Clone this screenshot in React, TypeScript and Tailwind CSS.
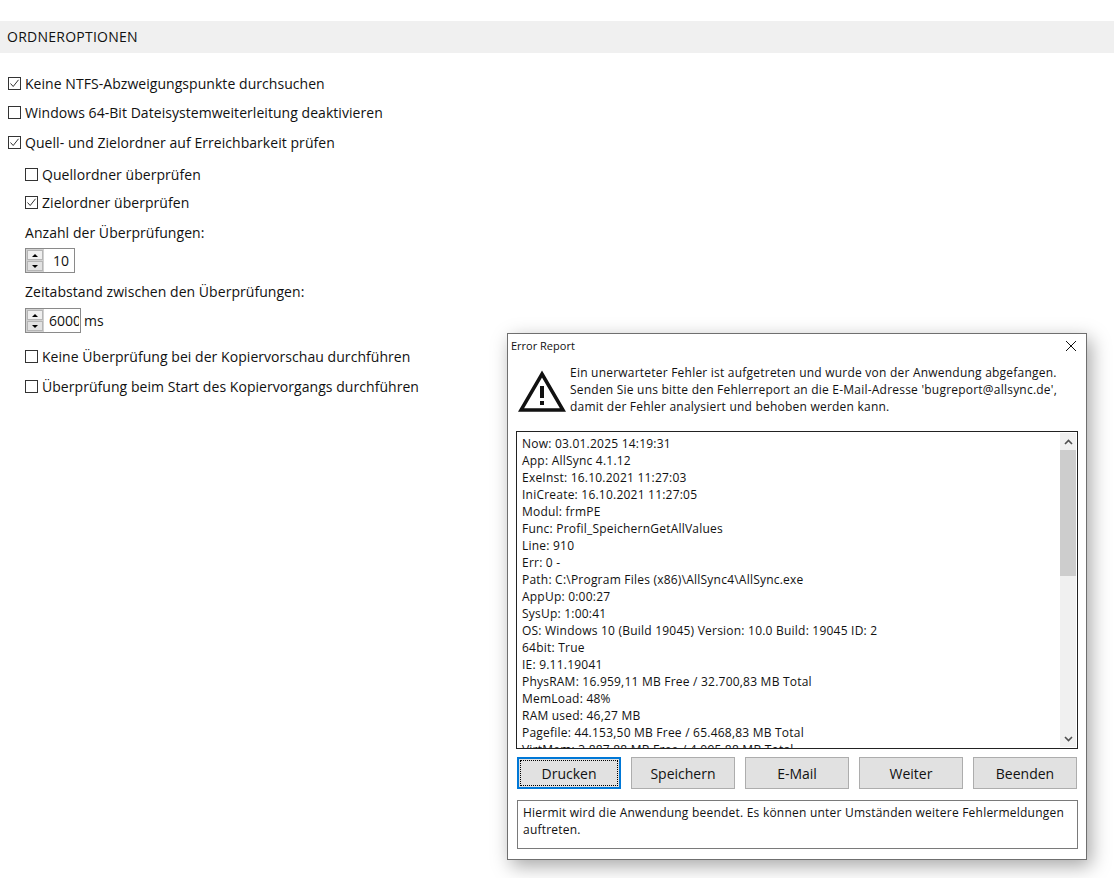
import React from 'react';

const font = { fontFamily: '"Open Sans", "Noto Sans", sans-serif' };

const reportLines = [
  'Now: 03.01.2025 14:19:31',
  'App: AllSync 4.1.12',
  'ExeInst: 16.10.2021 11:27:03',
  'IniCreate: 16.10.2021 11:27:05',
  'Modul: frmPE',
  'Func: Profil_SpeichernGetAllValues',
  'Line: 910',
  'Err: 0 -',
  'Path: C:\\Program Files (x86)\\AllSync4\\AllSync.exe',
  'AppUp: 0:00:27',
  'SysUp: 1:00:41',
  'OS: Windows 10 (Build 19045) Version: 10.0 Build: 19045 ID: 2',
  '64bit: True',
  'IE: 9.11.19041',
  'PhysRAM: 16.959,11 MB Free / 32.700,83 MB Total',
  'MemLoad: 48%',
  'RAM used: 46,27 MB',
  'Pagefile: 44.153,50 MB Free / 65.468,83 MB Total',
  'VirtMem: 3.887,88 MB Free / 4.095,88 MB Total',
];

const Check: React.FC<{ label: string; checked?: boolean; className?: string }> = ({ label, checked, className }) => (
  <div className={`flex items-center h-[20px] ${className ?? ''}`}>
    <div className="w-[13px] h-[13px] border border-[#333333] bg-white flex items-center justify-center shrink-0">
      {checked && (
        <svg width="11" height="11" viewBox="0 0 11 11" fill="none">
          <path d="M1.5 5.5 L4.2 8.5 L9.5 1.8" stroke="#333333" strokeWidth="1" />
        </svg>
      )}
    </div>
    <span className="ml-[4px] text-[14px] text-[#111111] tracking-[0.05px] whitespace-nowrap">{label}</span>
  </div>
);

const Spinner: React.FC<{ value: string; width: string; textClass: string }> = ({ value, width, textClass }) => (
  <div className={`flex h-[25px] border border-[#8a8a8a] bg-white ${width}`}>
    <div className="w-[18px] shrink-0 bg-[#d0d0d0] flex flex-col justify-center gap-[1px] pl-[1px] pr-[1px]">
      <div className="h-[10px] bg-[#efefef] border border-[#b5b5b5] flex items-center justify-center">
        <div className="w-0 h-0 border-x-[3px] border-x-transparent border-b-[3px] border-b-black" />
      </div>
      <div className="h-[10px] bg-[#e2e2e2] border border-[#b5b5b5] flex items-center justify-center">
        <div className="w-0 h-0 border-x-[3px] border-x-transparent border-t-[3px] border-t-black" />
      </div>
    </div>
    <div className={`flex-1 overflow-hidden mr-[1px] text-[14px] leading-[23px] text-[#111111] whitespace-nowrap ${textClass}`}>{value}</div>
  </div>
);

const ReportButton: React.FC<{ label: string; active?: boolean }> = ({ label, active }) =>
  active ? (
    <div className="w-[104px] h-[32px] border-2 border-[#0078d7] bg-[#e1e1e1] p-[1px]">
      <div className="h-full border border-dotted border-black flex items-center justify-center text-[14px] text-[#111111]">{label}</div>
    </div>
  ) : (
    <div className="w-[104px] h-[32px] border border-[#adadad] bg-[#e1e1e1] flex items-center justify-center text-[14px] text-[#111111]">{label}</div>
  );

export default function App() {
  return (
    <div className="relative w-[1114px] h-[878px] bg-white overflow-hidden" style={font}>
      <div className="pt-[21px]">
        <div className="h-[32px] bg-[#f0f0f0] px-[7px] pb-[2px] flex items-center text-[14px] text-[#111111] tracking-[0.25px]">ORDNEROPTIONEN</div>
      </div>

      <div className="pl-[8px] pt-[20px]">
        <Check label="Keine NTFS-Abzweigungspunkte durchsuchen" checked />
        <Check label="Windows 64-Bit Dateisystemweiterleitung deaktivieren" className="mt-[9px]" />
        <Check label="Quell- und Zielordner auf Erreichbarkeit prüfen" checked className="mt-[10px]" />

        <div className="pl-[17px]">
          <Check label="Quellordner überprüfen" className="mt-[12px]" />
          <Check label="Zielordner überprüfen" checked className="mt-[8px]" />
          <div className="mt-[11px] text-[14px] leading-[20px] text-[#111111] tracking-[0.05px]">Anzahl der Überprüfungen:</div>
          <div className="mt-[5px]">
            <Spinner value="10" width="w-[50px]" textClass="pl-[9px]" />
          </div>
          <div className="mt-[9px] text-[14px] leading-[20px] text-[#111111] tracking-[0.05px]">Zeitabstand zwischen den Überprüfungen:</div>
          <div className="mt-[6px] flex items-center">
            <Spinner value="6000" width="w-[56px]" textClass="pl-[5px]" />
            <span className="ml-[3px] text-[14px] text-[#111111]">ms</span>
          </div>
          <Check label="Keine Überprüfung bei der Kopiervorschau durchführen" className="mt-[13px]" />
          <Check label="Überprüfung beim Start des Kopiervorgangs durchführen" className="mt-[10px]" />
        </div>
      </div>

      {/* Error dialog floats above the options page */}
      <div className="absolute left-[507px] top-[333px] w-[580px] h-[527px] bg-white border border-[#6f6f6f] shadow-[4px_6px_18px_rgba(0,0,0,0.35)]">
        <div className="flex items-center justify-between h-[24px] pl-[3px] pr-[9px]">
          <span className="text-[11px] text-[#111111]">Error Report</span>
          <svg width="12" height="12" viewBox="0 0 12 12" fill="none">
            <path d="M1 1 L11 11 M11 1 L1 11" stroke="#111111" strokeWidth="1" />
          </svg>
        </div>

        <div className="flex pl-[10px] pt-[6px] h-[73px]">
          <svg width="48" height="44" viewBox="0 0 48 44" fill="none" className="shrink-0 mt-[6px]">
            <path d="M24 4 L45 40 L3 40 Z" stroke="#111111" strokeWidth="3.5" strokeLinejoin="miter" />
            <path d="M24 16 V28" stroke="#111111" strokeWidth="4" />
            <rect x="22" y="31" width="4" height="4" fill="#111111" />
          </svg>
          <div className="ml-[4px] text-[12px] leading-[17px] tracking-[0.22px] text-[#111111] whitespace-nowrap">
            Ein unerwarteter Fehler ist aufgetreten und wurde von der Anwendung abgefangen.
            <br />
            Senden Sie uns bitte den Fehlerreport an die E-Mail-Adresse 'bugreport@allsync.de',
            <br />
            damit der Fehler analysiert und behoben werden kann.
          </div>
        </div>

        <div className="mx-[8px] h-[318px] border border-[#222222] flex overflow-hidden">
          <div className="flex-1 overflow-hidden pl-[5px] pt-[3px] text-[12px] leading-[17px] tracking-[0.22px] text-[#111111] whitespace-nowrap">
            {reportLines.map((line) => (
              <div key={line}>{line}</div>
            ))}
          </div>
          <div className="w-[16px] mr-[1px] my-[1px] bg-[#f0f0f0] flex flex-col">
            <div className="h-[17px] flex items-center justify-center">
              <svg width="9" height="6" viewBox="0 0 9 6" fill="none">
                <path d="M1 5 L4.5 1.5 L8 5" stroke="#505050" strokeWidth="1.6" />
              </svg>
            </div>
            <div className="h-[126px] bg-[#cdcdcd]" />
            <div className="flex-1" />
            <div className="h-[17px] flex items-center justify-center">
              <svg width="9" height="6" viewBox="0 0 9 6" fill="none">
                <path d="M1 1 L4.5 4.5 L8 1" stroke="#505050" strokeWidth="1.6" />
              </svg>
            </div>
          </div>
        </div>

        <div className="mx-[9px] mt-[8px] flex justify-between">
          <ReportButton label="Drucken" active />
          <ReportButton label="Speichern" />
          <ReportButton label="E-Mail" />
          <ReportButton label="Weiter" />
          <ReportButton label="Beenden" />
        </div>

        <div className="ml-[9px] mr-[8px] mt-[11px] h-[49px] border border-[#7a7a7a] px-[5px] pt-[3px] text-[12px] leading-[17px] tracking-[0.22px] text-[#111111]">
          Hiermit wird die Anwendung beendet. Es können unter Umständen weitere Fehlermeldungen auftreten.
        </div>
      </div>
    </div>
  );
}
